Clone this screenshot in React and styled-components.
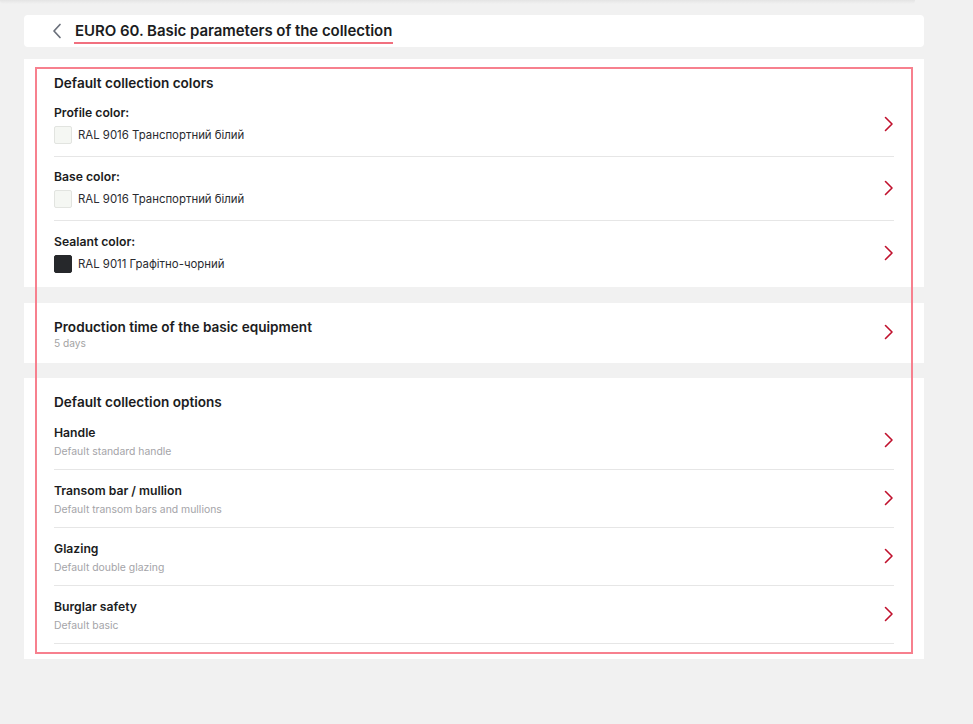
import React from "react";
import styled, { createGlobalStyle } from "styled-components";

const GlobalStyle = createGlobalStyle`
  html, body {
    margin: 0;
    background: #f1f1f1;
    font-family: Inter, "Noto Sans", sans-serif;
    color: #1d1d22;
  }
`;

const colorRows = [
  { label: "Profile color:", value: "RAL 9016 Транспортний білий", swatch: "#f5f7f3" },
  { label: "Base color:", value: "RAL 9016 Транспортний білий", swatch: "#f5f7f3" },
  { label: "Sealant color:", value: "RAL 9011 Графітно-чорний", swatch: "#26282b" },
];

const optionRows = [
  { label: "Handle", value: "Default standard handle" },
  { label: "Transom bar / mullion", value: "Default transom bars and mullions" },
  { label: "Glazing", value: "Default double glazing" },
  { label: "Burglar safety", value: "Default basic" },
];

function Chevron({ shift }) {
  return (
    <ChevronBox $shift={shift}>
      <svg width="10" height="16" viewBox="0 0 10 16" fill="none">
        <path d="M1.5 1.5 L8 8 L1.5 14.5" stroke="#c0112d" strokeWidth="1.6" strokeLinecap="round" strokeLinejoin="round" />
      </svg>
    </ChevronBox>
  );
}

export default function App() {
  return (
    <>
      <GlobalStyle />
      <TopShade />
      <Page>
        <HeaderCard>
          <BackButton>
            <svg width="10" height="16" viewBox="0 0 10 16" fill="none">
              <path d="M8 1.5 L2 8 L8 14.5" stroke="#6a6f7a" strokeWidth="1.7" strokeLinecap="round" strokeLinejoin="round" />
            </svg>
          </BackButton>
          <Title>EURO 60. Basic parameters of the collection</Title>
        </HeaderCard>

        <Content>
          <Highlight />
          <Panel $pad="16px 30px 2px">
            <SectionTitle $mb="2px">Default collection colors</SectionTitle>
            {colorRows.map((r, i) => (
              <ColorRow key={r.label} $last={i === colorRows.length - 1}>
                <div>
                  <RowLabel>{r.label}</RowLabel>
                  <SwatchLine>
                    <Swatch $color={r.swatch} />
                    <SwatchText>{r.value}</SwatchText>
                  </SwatchLine>
                </div>
                <Chevron shift="-1px" />
              </ColorRow>
            ))}
          </Panel>

          <Panel $pad="0 30px">
            <TimeRow>
              <div>
                <SectionTitle $mb="2px">Production time of the basic equipment</SectionTitle>
                <TimeValue>5 days</TimeValue>
              </div>
              <Chevron shift="-3px" />
            </TimeRow>
          </Panel>

          <Panel $pad="16px 30px 15px" $mt="-1px">
            <SectionTitle $mb="2px">Default collection options</SectionTitle>
            {optionRows.map((r) => (
              <OptionRow key={r.label}>
                <div>
                  <RowLabel>{r.label}</RowLabel>
                  <OptionValue>{r.value}</OptionValue>
                </div>
                <Chevron shift="-3px" />
              </OptionRow>
            ))}
          </Panel>
        </Content>
      </Page>
    </>
  );
}

const TopShade = styled.div`
  width: 915px;
  height: 4px;
  background: linear-gradient(#e4e4e4, #f1f1f1);
  border-radius: 0 0 4px 4px;
`;

const Page = styled.div`
  width: 900px;
  padding: 11px 0 40px 24px;
`;

const HeaderCard = styled.div`
  height: 32px;
  background: #fff;
  border-radius: 4px;
  display: flex;
  align-items: center;
  padding-left: 28px;
`;

const BackButton = styled.div`
  display: flex;
  align-items: center;
  width: 22px;
`;

const Title = styled.h1`
  margin: 0;
  font-size: 15px;
  font-weight: 600;
  letter-spacing: -0.05px;
  color: #1b1c21;
  padding: 0 1px 2px;
  border-bottom: 2px solid #f1707f;
  line-height: 18px;
  margin-top: 3px;
`;

const Content = styled.div`
  position: relative;
  margin-top: 12px;
  display: flex;
  flex-direction: column;
  gap: 16px;
`;

const Highlight = styled.div`
  position: absolute;
  left: 11px;
  top: 8px;
  width: 874px;
  height: 583px;
  border: 2px solid #f7808e;
  pointer-events: none;
`;

const Panel = styled.section`
  background: #fff;
  padding: ${(p) => p.$pad};
  margin-top: ${(p) => p.$mt || "0"};
`;

const SectionTitle = styled.h2`
  margin: 0 0 ${(p) => p.$mb || "0"};
  font-size: 13.6px;
  font-weight: 600;
  line-height: 16px;
  color: #1b1c21;
`;

const ChevronBox = styled.span`
  display: flex;
  margin-top: ${(p) => p.$shift || "0"};
`;

const ColorRow = styled.div`
  height: 64px;
  box-sizing: border-box;
  display: flex;
  justify-content: space-between;
  align-items: center;
  border-bottom: ${(p) => (p.$last ? "none" : "1px solid #e6e6e6")};
`;

const RowLabel = styled.div`
  font-size: 12.2px;
  font-weight: 600;
  line-height: 15px;
  color: #1b1c21;
`;

const SwatchLine = styled.div`
  display: flex;
  align-items: center;
  gap: 6px;
  margin-top: 6px;
`;

const Swatch = styled.span`
  width: 16px;
  height: 16px;
  border-radius: 2px;
  border: 1px solid ${(p) => (p.$color === "#26282b" ? "#26282b" : "#e2e4e0")};
  background: ${(p) => p.$color};
`;

const SwatchText = styled.span`
  font-size: 11.4px;
  color: #2a2b30;
`;

const TimeRow = styled.div`
  height: 60px;
  display: flex;
  justify-content: space-between;
  align-items: center;
  padding-top: 1px;
  box-sizing: border-box;
`;

const TimeValue = styled.div`
  font-size: 10.2px;
  color: #a3a3a3;
`;

const OptionRow = styled.div`
  height: 58px;
  box-sizing: border-box;
  display: flex;
  justify-content: space-between;
  align-items: center;
  border-bottom: 1px solid #e6e6e6;
  padding-top: 2px;
`;

const OptionValue = styled.div`
  margin-top: 5px;
  font-size: 10.4px;
  color: #a4a4a8;
`;
